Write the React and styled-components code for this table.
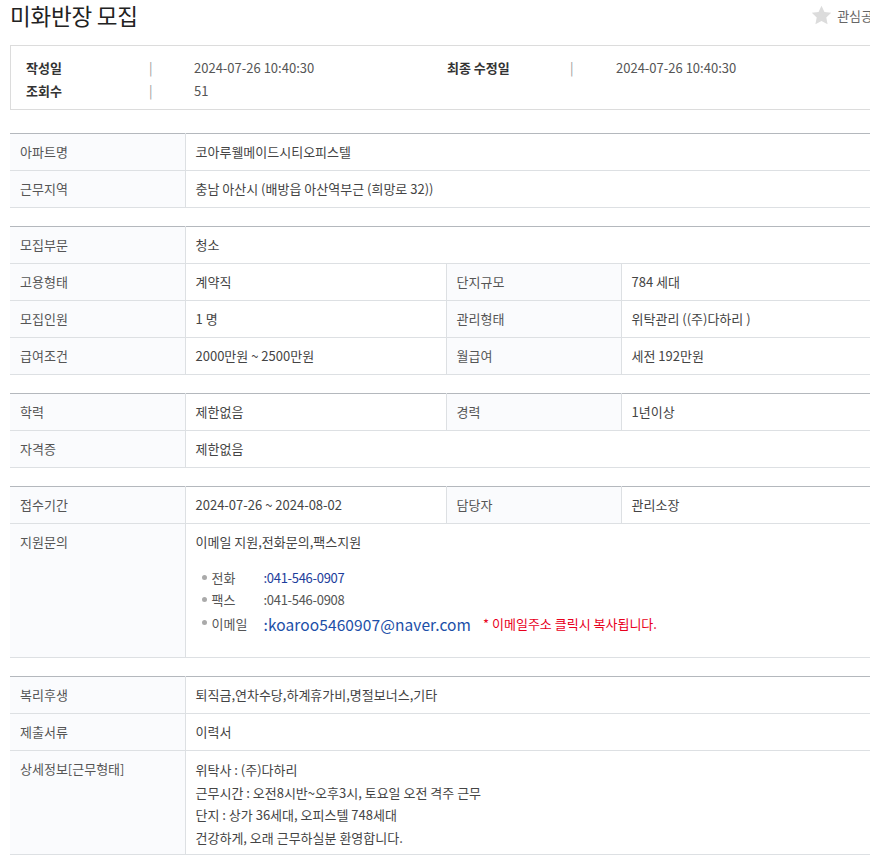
import React from "react";
import styled, { createGlobalStyle } from "styled-components";

const Global = createGlobalStyle`
  html, body { margin: 0; padding: 0; background: #fff; overflow: hidden; }
  body { font-family: "Noto Sans CJK KR", "Noto Sans", sans-serif; font-size: 13px; color: #444; }
`;

const Page = styled.div`
  width: 875px;
  margin-left: 10px;
  padding-bottom: 20px;
`;

const Header = styled.div`
  display: flex;
  align-items: center;
  justify-content: space-between;
  height: 30px;
  margin-bottom: 15px;
`;

const Title = styled.h1`
  margin: 0;
  font-size: 22.5px;
  line-height: 28px;
  font-weight: 400;
  color: #222;
  letter-spacing: -0.2px;
`;

const Fav = styled.button`
  display: flex;
  align-items: center;
  gap: 5px;
  border: 0;
  background: none;
  padding: 0;
  font: inherit;
  font-size: 13px;
  color: #666;
  white-space: nowrap;
`;

const InfoBox = styled.div`
  border: 1px solid #dcdcdc;
  padding: 10px 15px 7px;
  display: grid;
  grid-template-columns: 123px 45px 253px 123px 46px 1fr;
  line-height: 23px;
  color: #555;
`;

const InfoLabel = styled.div`
  font-weight: 700;
  color: #333;
`;

const Pipe = styled.div`
  color: #999;
`;

const Table = styled.table`
  width: 100%;
  border-collapse: collapse;
  table-layout: fixed;
  border-top: 1px solid #b4b8bd;
  border-bottom: 1px solid #b4b8bd;
  margin-top: ${(p) => p.$gap || 18}px;
`;

const Th = styled.th`
  background: #fafbfd;
  font-weight: 400;
  text-align: left;
  vertical-align: top;
  padding: 10px 10px;
  line-height: 16px;
  color: #555;
  border-bottom: 1px solid #dde0e3;
  border-right: 1px solid #dde0e3;
  border-left: ${(p) => (p.$inner ? "1px solid #dde0e3" : "0")};
`;

const Td = styled.td`
  padding: ${(p) => (p.$multi ? "8px 10px 5px" : "10px 10px")};
  line-height: ${(p) => (p.$multi ? "22.6px" : "16px")};
  color: #444;
  vertical-align: top;
  border-bottom: 1px solid #dde0e3;
`;

const ContactList = styled.ul`
  list-style: none;
  margin: 17px 0 11px 0;
  padding: 0 0 0 6px;
`;

const ContactItem = styled.li`
  display: flex;
  align-items: center;
  height: ${(p) => (p.$tall ? 25 : 22)}px;
  &::before {
    content: "";
    width: 5px;
    height: 5px;
    border-radius: 50%;
    background: #aaa;
    margin-right: 5px;
    margin-top: -2px;
  }
`;

const CLabel = styled.span`
  width: 52px;
  color: #555;
`;

const CValue = styled.span`
  color: ${(p) => p.$color || "#555"};
  font-size: ${(p) => (p.$big ? "15.5px" : "13px")};
  letter-spacing: ${(p) => (p.$big ? "0.1px" : "-0.3px")};
`;

const Note = styled.span`
  color: #e8001c;
  margin-left: 12px;
`;

const Star = () => (
  <svg width="21" height="20" viewBox="0 0 24 23">
    <path
      d="M12 0.8l3.4 7.2 7.8 1-5.7 5.4 1.5 7.8L12 18.4l-7 3.8 1.5-7.8L0.8 9l7.8-1z"
      fill="#dcdcdc"
    />
  </svg>
);

const Row2 = ({ a, b }) => (
  <tr>
    <Th>{a}</Th>
    <Td colSpan={3}>{b}</Td>
  </tr>
);

const Row4 = ({ a, b, c, d }) => (
  <tr>
    <Th>{a}</Th>
    <Td>{b}</Td>
    <Th $inner>{c}</Th>
    <Td>{d}</Td>
  </tr>
);

const Cols = () => (
  <colgroup>
    <col style={{ width: 175 }} />
    <col style={{ width: 261 }} />
    <col style={{ width: 175 }} />
    <col />
  </colgroup>
);

export default function App() {
  return (
    <>
      <Global />
      <Page>
        <Header>
          <Title>미화반장 모집</Title>
          <Fav>
            <Star />
            관심공고
          </Fav>
        </Header>

        <InfoBox>
          <InfoLabel>작성일</InfoLabel>
          <Pipe>|</Pipe>
          <div>2024-07-26 10:40:30</div>
          <InfoLabel>최종 수정일</InfoLabel>
          <Pipe>|</Pipe>
          <div>2024-07-26 10:40:30</div>
          <InfoLabel>조회수</InfoLabel>
          <Pipe>|</Pipe>
          <div>51</div>
        </InfoBox>

        <Table $gap={23}>
          <Cols />
          <tbody>
            <Row2 a="아파트명" b="코아루웰메이드시티오피스텔" />
            <Row2 a="근무지역" b="충남  아산시 (배방읍 아산역부근 (희망로 32))" />
          </tbody>
        </Table>

        <Table>
          <Cols />
          <tbody>
            <Row2 a="모집부문" b="청소" />
            <Row4 a="고용형태" b="계약직" c="단지규모" d="784 세대" />
            <Row4 a="모집인원" b="1 명" c="관리형태" d="위탁관리 ((주)다하리 )" />
            <Row4 a="급여조건" b="2000만원 ~ 2500만원" c="월급여" d="세전 192만원" />
          </tbody>
        </Table>

        <Table>
          <Cols />
          <tbody>
            <Row4 a="학력" b="제한없음" c="경력" d="1년이상" />
            <Row2 a="자격증" b="제한없음" />
          </tbody>
        </Table>

        <Table>
          <Cols />
          <tbody>
            <Row4 a="접수기간" b="2024-07-26 ~ 2024-08-02" c="담당자" d="관리소장" />
            <tr>
              <Th>지원문의</Th>
              <Td colSpan={3}>
                이메일 지원,전화문의,팩스지원
                <ContactList>
                  <ContactItem>
                    <CLabel>전화</CLabel>
                    <CValue $color="#1c3d9c">:041-546-0907</CValue>
                  </ContactItem>
                  <ContactItem>
                    <CLabel>팩스</CLabel>
                    <CValue>:041-546-0908</CValue>
                  </ContactItem>
                  <ContactItem $tall>
                    <CLabel>이메일</CLabel>
                    <CValue $big $color="#1c4fa8">:koaroo5460907@naver.com</CValue>
                    <Note>* 이메일주소 클릭시 복사됩니다.</Note>
                  </ContactItem>
                </ContactList>
              </Td>
            </tr>
          </tbody>
        </Table>

        <Table>
          <Cols />
          <tbody>
            <Row2 a="복리후생" b="퇴직금,연차수당,하계휴가비,명절보너스,기타" />
            <Row2 a="제출서류" b="이력서" />
            <tr>
              <Th>상세정보[근무형태]</Th>
              <Td colSpan={3} $multi>
                위탁사 : (주)다하리
                <br />
                근무시간 : 오전8시반~오후3시, 토요일 오전 격주 근무
                <br />
                단지 : 상가 36세대, 오피스텔 748세대
                <br />
                건강하게, 오래 근무하실분 환영합니다.
              </Td>
            </tr>
          </tbody>
        </Table>
      </Page>
    </>
  );
}
